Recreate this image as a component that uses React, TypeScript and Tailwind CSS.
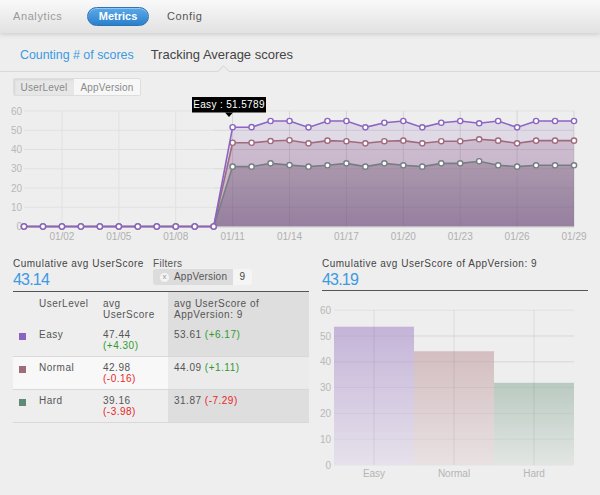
import React from 'react';

const BLUE = '#3b9ae1';
const Z = Array(11).fill(0);

const EASY = [...Z, 51.58, 51.6, 54.8, 54.8, 51.5, 54.8, 54.8, 51.5, 53.9, 54.8, 51.5, 53.9, 54.8, 53.6, 54.8, 51.5, 54.8, 54.8, 54.8];
const NORMAL = [...Z, 43.5, 43.5, 44.4, 44.8, 43.2, 44.6, 44.3, 43.2, 44.3, 44.6, 43.2, 44.3, 44.3, 45.3, 44.6, 43.2, 44.6, 44.6, 44.6];
const HARD = [...Z, 31.1, 31.1, 32.8, 31.9, 31.1, 31.8, 32.8, 31.1, 32.8, 31.8, 31.1, 32.8, 32.8, 33.9, 31.8, 31.1, 31.8, 31.8, 31.8];

const X = (i: number) => 24 + i * 18.966;
const Y = (v: number) => 226.5 - v * 1.925;

const linePath = (d: number[]) =>
  d.map((v, i) => `${i ? 'L' : 'M'}${X(i).toFixed(1)},${Y(v).toFixed(1)}`).join(' ');
const areaPath = (d: number[]) => `${linePath(d)} L${X(29).toFixed(1)},226.5 L${X(0)},226.5 Z`;

// areas are painted easy -> hard, lines hard -> easy (easy on top)
const SERIES = [
  { name: 'Easy', data: EASY, color: '#8b65c2', fill: 'rgba(140,100,190,0.14)' },
  { name: 'Normal', data: NORMAL, color: '#a06a7c', fill: 'url(#normalFill)' },
  { name: 'Hard', data: HARD, color: '#767e84', fill: 'url(#hardFill)' },
];

const TICKS = [2, 5, 8, 11, 14, 17, 20, 23, 26, 29];

const TopNav = () => (
  <div className="relative z-10 h-[33px] flex items-center bg-gradient-to-b from-[#f9f9f9] to-[#e2e2e2] shadow-[0_2px_4px_rgba(0,0,0,0.12)]">
    <span className="ml-[13px] w-[74px] text-[11px] tracking-[0.6px] text-[#9a9a9a]">Analytics</span>
    <span className="h-[19px] w-[62px] rounded-full border border-[#2d74b6] bg-gradient-to-b from-[#5aaae8] to-[#2b7fcb] shadow-[inset_0_1px_0_rgba(255,255,255,0.35)] flex items-center justify-center text-white font-bold text-[11px]">
      Metrics
    </span>
    <span className="ml-[18px] text-[11px] tracking-[0.6px] text-[#555]">Config</span>
  </div>
);

const SubTabs = () => (
  <div className="flex gap-[17px] pl-[20px] pt-[14px] pb-[8px] border-b border-[#d8d8d8]">
    <span className="text-[12.4px] leading-[16px]" style={{ color: BLUE }}>
      Counting # of scores
    </span>
    <span className="relative text-[13px] leading-[16px] text-[#444]">
      Tracking Average scores
      {/* selected tab notch */}
      <span className="absolute left-1/2 -ml-[3px] top-[20px] w-[9px] h-[9px] rotate-45 bg-[#eeeeee] border-l border-t border-[#d8d8d8]" />
    </span>
  </div>
);

const ChartTabs = () => (
  <div className="flex h-[18px] rounded-[2px] border border-[#dddddd] text-[10px] tracking-[0.2px] text-[#8a8a8a] overflow-hidden">
    <span className="w-[60px] flex items-center justify-center bg-[#e7e7e7] shadow-[inset_1px_1px_2px_rgba(0,0,0,0.08)]">
      UserLevel
    </span>
    <span className="w-[66px] flex items-center justify-center bg-[#f7f7f7]">AppVersion</span>
  </div>
);

const TrendChart = () => (
  <svg width={600} height={150} viewBox="0 96 600 150" className="block" fontFamily="Liberation Sans, Arial, sans-serif">
    <defs>
      <linearGradient id="normalFill" x1="0" y1="140" x2="0" y2="227" gradientUnits="userSpaceOnUse">
        <stop offset="0" stopColor="rgb(158,118,150)" stopOpacity="0.3" />
        <stop offset="1" stopColor="rgb(150,105,145)" stopOpacity="0.38" />
      </linearGradient>
      <linearGradient id="hardFill" x1="0" y1="162" x2="0" y2="227" gradientUnits="userSpaceOnUse">
        <stop offset="0" stopColor="#ac99ad" />
        <stop offset="1" stopColor="#967fa0" />
      </linearGradient>
    </defs>

    {[0, 10, 20, 30, 40, 50, 60].map((v) => (
      <g key={v}>
        <line x1={24} x2={574} y1={Y(v)} y2={Y(v)} stroke="#e1e1e1" />
        <text x={22} y={Y(v) + 3.5} fontSize={10} fill="#b8b8b8" textAnchor="end">
          {v}
        </text>
      </g>
    ))}
    {TICKS.map((i) => (
      <line key={i} x1={X(i)} x2={X(i)} y1={111} y2={226.5} stroke="#e1e1e1" />
    ))}

    {SERIES.map((s) => (
      <path key={s.name} d={areaPath(s.data)} fill={s.fill} />
    ))}

    {[10, 20, 30, 40, 50].map((v) => (
      <line key={v} x1={214} x2={574} y1={Y(v)} y2={Y(v)} stroke="rgba(0,0,0,0.04)" />
    ))}
    {TICKS.filter((i) => i > 10).map((i) => (
      <line key={i} x1={X(i)} x2={X(i)} y1={111} y2={226.5} stroke="rgba(0,0,0,0.05)" />
    ))}

    <line x1={24} x2={574} y1={227} y2={227} stroke="#cdcdcd" />

    {[...SERIES].reverse().map((s) => (
      <g key={s.name}>
        <path d={linePath(s.data)} fill="none" stroke={s.color} strokeWidth={1.6} />
        {s.data.map((v, i) => (
          <circle key={i} cx={X(i)} cy={Y(v)} r={2.6} fill="#fff" stroke={s.color} strokeWidth={1.4} />
        ))}
      </g>
    ))}

    {TICKS.map((i) => (
      <text key={i} x={X(i)} y={239.5} fontSize={10} fill="#b0b0b0" textAnchor="middle">
        {`01/${String(i).padStart(2, '0')}`}
      </text>
    ))}

    {/* tooltip */}
    <rect x={192} y={97} width={74} height={15.5} fill="#000" />
    <path d="M225,112.5 L233,112.5 L229,117 Z" fill="#000" />
    <text x={229} y={108.3} fontSize={10} letterSpacing={0.35} fill="#fff" textAnchor="middle">
      Easy : 51.5789
    </text>
  </svg>
);

const ROWS = [
  { label: 'Easy', swatch: '#8a64c0', avg: '47.44', d: '(+4.30)', up: true, v: '53.61', d2: '(+6.17)', up2: true, alt: false },
  { label: 'Normal', swatch: '#9e6e78', avg: '42.98', d: '(-0.16)', up: false, v: '44.09', d2: '(+1.11)', up2: true, alt: true },
  { label: 'Hard', swatch: '#5f8a76', avg: '39.16', d: '(-3.98)', up: false, v: '31.87', d2: '(-7.29)', up2: false, alt: false },
];

const GREEN = '#2f9a2f';
const RED = '#e82626';

const ScoreTable = () => (
  <div className="w-[296px] text-[10px] leading-[10.5px] tracking-[0.5px]">
    <div className="h-[33px] flex">
      <div className="w-[140px]">
        <div className="leading-[12px] text-[#444]">Cumulative avg UserScore</div>
        <div className="text-[16px] leading-[20px] tracking-[-0.8px]" style={{ color: BLUE }}>
          43.14
        </div>
      </div>
      <div>
        <div className="leading-[12px] tracking-[0.3px] text-[#555]">Filters</div>
        <div className="mt-[-1px] flex h-[16px] rounded-[3px] overflow-hidden tracking-[0.2px]">
          <div className="w-[80px] flex items-center bg-[#dcdcdc] pl-[7px] gap-[5px] text-[#555]">
            <span className="w-[9px] h-[9px] rounded-full bg-[#f4f4f4] text-[#999] text-[8px] leading-[8px] tracking-normal flex items-center justify-center">
              x
            </span>
            AppVersion
          </div>
          <div className="w-[19px] bg-[#f5f5f5] flex items-center justify-center text-[#444]">9</div>
        </div>
      </div>
    </div>

    <div className="border-t border-[#555]">
      <div className="grid grid-cols-[26px_64px_65px_141px] text-[#555]">
        <div />
        <div className="pt-[7px] pb-[4px]">UserLevel</div>
        <div className="pt-[7px] pb-[4px]">
          avg
          <br />
          UserScore
        </div>
        <div className="pt-[7px] pb-[4px] pl-[6px] bg-[#dedede]">
          avg UserScore of
          <br />
          AppVersion: 9
        </div>
      </div>
      {ROWS.map((r) => (
        <div
          key={r.label}
          className={`grid grid-cols-[26px_64px_65px_141px] border-b border-[#d8d8d8] text-[#555] ${r.alt ? 'bg-[#f8f8f8]' : ''}`}
        >
          <div className="pt-[9px] pl-[6px]">
            <div className="w-[7px] h-[7px]" style={{ background: r.swatch }} />
          </div>
          <div className="pt-[6px] pb-[5px]">{r.label}</div>
          <div className="pt-[6px] pb-[5px]">
            {r.avg}
            <br />
            <span style={{ color: r.up ? GREEN : RED }}>{r.d}</span>
          </div>
          <div className={`pt-[6px] pb-[5px] pl-[6px] ${r.alt ? 'bg-[#ebebeb]' : 'bg-[#dedede]'}`}>
            {r.v} <span style={{ color: r.up2 ? GREEN : RED }}>{r.d2}</span>
          </div>
        </div>
      ))}
    </div>
  </div>
);

const BY = (v: number) => 466 - v * 2.58;

const BARS = [
  { label: 'Easy', v: 53.61, x: 334, top: '#c4b4d8', bottom: '#e6e1eb' },
  { label: 'Normal', v: 44.09, x: 414, top: '#d3bec1', bottom: '#e8e1e2' },
  { label: 'Hard', v: 31.87, x: 494, top: '#bacac1', bottom: '#e2e6e3' },
];

const BarPanel = () => (
  <div className="w-[266px]">
    <div className="h-[33px] border-b border-[#555] text-[10px] tracking-[0.5px]">
      <div className="leading-[12px] text-[#444]">Cumulative avg UserScore of AppVersion: 9</div>
      <div className="text-[16px] leading-[20px] tracking-[-0.8px]" style={{ color: BLUE }}>
        43.19
      </div>
    </div>
    <svg
      width={266}
      height={190}
      viewBox="322 292 266 190"
      className="block overflow-visible"
      fontFamily="Liberation Sans, Arial, sans-serif"
    >
      <defs>
        {BARS.map((b) => (
          <linearGradient key={b.label} id={`bar${b.label}`} x1="0" y1="0" x2="0" y2="1">
            <stop offset="0" stopColor={b.top} />
            <stop offset="1" stopColor={b.bottom} />
          </linearGradient>
        ))}
      </defs>
      {[0, 10, 20, 30, 40, 50, 60].map((v) => (
        <g key={v}>
          <line x1={334} x2={574} y1={BY(v)} y2={BY(v)} stroke="#e1e1e1" />
          <text x={331} y={BY(v) + 3.5} fontSize={10} fill="#b8b8b8" textAnchor="end">
            {v}
          </text>
        </g>
      ))}
      {BARS.map((b) => (
        <rect key={b.label} x={b.x} y={BY(b.v)} width={80} height={466 - BY(b.v)} fill={`url(#bar${b.label})`} />
      ))}
      {[10, 20, 30, 40, 50].map((v) => (
        <line key={v} x1={334} x2={574} y1={BY(v)} y2={BY(v)} stroke="rgba(0,0,0,0.04)" />
      ))}
      {BARS.map((b) => (
        <g key={b.label}>
          <line x1={b.x + 40} x2={b.x + 40} y1={BY(60)} y2={466} stroke="rgba(0,0,0,0.07)" />
          <text x={b.x + 40} y={477.5} fontSize={10} fill="#b5b5b5" textAnchor="middle">
            {b.label}
          </text>
        </g>
      ))}
    </svg>
  </div>
);

export default function App() {
  return (
    <div className="w-[600px] h-[495px] overflow-hidden bg-[#eeeeee] text-[#555] font-['Liberation_Sans',Arial,sans-serif]">
      <TopNav />
      <SubTabs />
      <div className="flex px-[13px] pt-[6px]">
        <ChartTabs />
      </div>
      <TrendChart />
      <div className="flex gap-[13px] px-[13px] pt-[12px]">
        <ScoreTable />
        <BarPanel />
      </div>
    </div>
  );
}
